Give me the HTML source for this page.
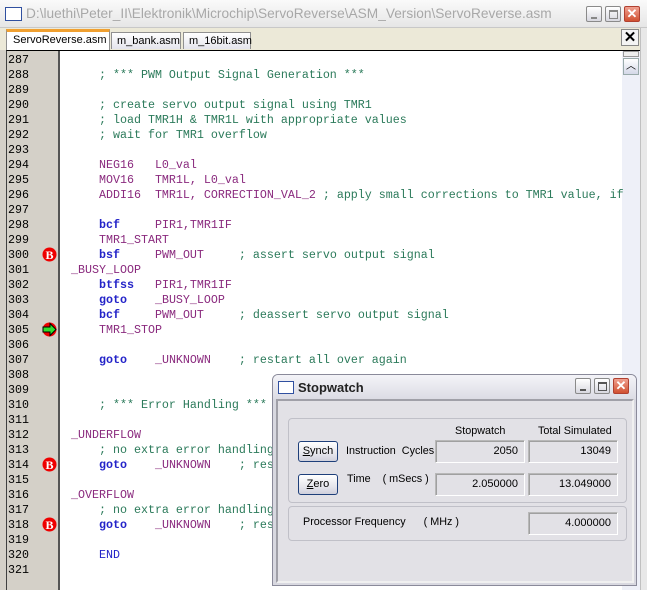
<!DOCTYPE html>
<html><head><meta charset="utf-8"><style>
*{margin:0;padding:0;box-sizing:border-box}
body{width:647px;height:590px;overflow:hidden;background:#d4d0c8;position:relative;font-family:"Liberation Sans",sans-serif}
.abs{position:absolute}
.code{font-family:"Liberation Mono",monospace;font-size:11.67px;line-height:15px;white-space:pre}
.ln{position:absolute;left:8px;color:#000}
.cl{position:absolute;left:71px}
.k{color:#2323c8;font-weight:bold}
.p{color:#8a2a7e}
.c{color:#2b7a5a}
.d{color:#2323c8}
.tb{position:absolute;width:16px;height:16px;border:1px solid #8a8a8a;background:linear-gradient(#fff,#d8d8e0);border-radius:2px}
.fld{position:absolute;border:1px solid #b8b8b8;border-right-color:#fff;border-bottom-color:#fff;box-shadow:inset 1px 1px 0 #a0a0a0;background:#e2e1e6;font-size:11px;text-align:right;padding:4px 6px 0 0;height:23px}
.lbl{position:absolute;font-size:10.8px;color:#000;white-space:nowrap}
.btn{position:absolute;width:40px;height:21px;border:1px solid #1e3f7a;border-radius:3px;background:linear-gradient(#fff,#e6e6ec 60%,#cfd0dc);font-size:11px;text-align:center;line-height:19px}
.tab{position:absolute;font-size:11px;white-space:nowrap}
</style></head><body>
<div class="abs" style="left:0;top:0;width:647px;height:28px;background:linear-gradient(#fafafa,#e6e6e6);border-bottom:1px solid #c8c8c8"></div>
<div class="abs" style="left:5px;top:7px;width:17px;height:14px;border:1px solid #3050a0;background:#fff"></div>
<div class="abs" style="left:26px;top:6px;font-size:13.7px;color:#a8a8a8;white-space:nowrap">D:\luethi\Peter_II\Elektronik\Microchip\ServoReverse\ASM_Version\ServoReverse.asm</div>
<div class="tb" style="left:586px;top:6px"><div class="abs" style="left:4px;top:10px;width:6px;height:2px;background:#888"></div></div>
<div class="tb" style="left:605px;top:6px"><div class="abs" style="left:3px;top:3px;width:9px;height:9px;border:1px solid #888;border-top-width:2px"></div></div>
<div class="tb" style="left:624px;top:6px;background:linear-gradient(#f0a090,#d05030);border-color:#b04030;color:#fff;font-size:13px;line-height:14px;text-align:center;font-weight:bold">✕</div>
<div class="abs" style="left:0;top:28px;width:647px;height:22px;background:#ece9d8"></div>
<div class="tab" style="left:6px;top:29px;width:104px;height:21px;background:#fff;border:1px solid #909090;border-top:3px solid #f0a030;border-bottom:none;padding:2px 0 0 6px">ServoReverse.asm</div>
<div class="tab" style="left:111px;top:32px;width:70px;height:17px;background:linear-gradient(#fff,#e4e4ec);border:1px solid #909090;border-bottom:none;padding:2px 0 0 5px">m_bank.asm</div>
<div class="tab" style="left:183px;top:32px;width:68px;height:17px;background:linear-gradient(#fff,#e4e4ec);border:1px solid #909090;border-bottom:none;padding:2px 0 0 5px">m_16bit.asm</div>
<div class="abs" style="left:621px;top:29px;width:18px;height:17px;border:1px solid #888;background:#f4f4f4;font-size:15px;font-weight:bold;text-align:center;line-height:15px">✕</div>
<div class="abs" style="left:6px;top:50px;width:634px;height:540px;background:#fff;border-top:1px solid #000;border-left:1px solid #404040"></div>
<div class="abs" style="left:7px;top:51px;width:53px;height:539px;background:#d4d0c8;border-right:2px solid #555"></div>
<div class="abs" style="left:622px;top:51px;width:18px;height:539px;background:#eef0f8"></div>
<div class="abs" style="left:623px;top:51px;width:16px;height:6px;border:1px solid #999;background:#eee"></div>
<div class="abs" style="left:623px;top:58px;width:16px;height:17px;border:1px solid #9aa;background:linear-gradient(#fff,#d4d8e8);font-size:10px;text-align:center;line-height:16px">︿</div>
<div class="abs" style="left:640px;top:28px;width:7px;height:562px;background:#e8e8e8;border-left:1px solid #c0c0c0"></div>

<div class="code">
<div class="ln" style="top:53px">287</div>
<div class="ln" style="top:68px">288</div><div class="cl c" style="top:68px">    ; *** PWM Output Signal Generation ***</div>
<div class="ln" style="top:83px">289</div>
<div class="ln" style="top:98px">290</div><div class="cl c" style="top:98px">    ; create servo output signal using TMR1</div>
<div class="ln" style="top:113px">291</div><div class="cl c" style="top:113px">    ; load TMR1H &amp; TMR1L with appropriate values</div>
<div class="ln" style="top:128px">292</div><div class="cl c" style="top:128px">    ; wait for TMR1 overflow</div>
<div class="ln" style="top:143px">293</div>
<div class="ln" style="top:158px">294</div><div class="cl p" style="top:158px">    NEG16   L0_val</div>
<div class="ln" style="top:173px">295</div><div class="cl p" style="top:173px">    MOV16   TMR1L, L0_val</div>
<div class="ln" style="top:188px">296</div><div class="cl" style="top:188px"><span class="p">    ADDI16  TMR1L, CORRECTION_VAL_2 </span><span class="c">; apply small corrections to TMR1 value, if</span></div>
<div class="ln" style="top:203px">297</div>
<div class="ln" style="top:218px">298</div><div class="cl" style="top:218px">    <span class="k">bcf</span><span class="p">     PIR1,TMR1IF</span></div>
<div class="ln" style="top:233px">299</div><div class="cl p" style="top:233px">    TMR1_START</div>
<div class="ln" style="top:248px">300</div><div class="cl" style="top:248px">    <span class="k">bsf</span><span class="p">     PWM_OUT</span>     <span class="c">; assert servo output signal</span></div>
<div class="ln" style="top:263px">301</div><div class="cl p" style="top:263px">_BUSY_LOOP</div>
<div class="ln" style="top:278px">302</div><div class="cl" style="top:278px">    <span class="k">btfss</span><span class="p">   PIR1,TMR1IF</span></div>
<div class="ln" style="top:293px">303</div><div class="cl" style="top:293px">    <span class="k">goto</span><span class="p">    _BUSY_LOOP</span></div>
<div class="ln" style="top:308px">304</div><div class="cl" style="top:308px">    <span class="k">bcf</span><span class="p">     PWM_OUT</span>     <span class="c">; deassert servo output signal</span></div>
<div class="ln" style="top:323px">305</div><div class="cl p" style="top:323px">    TMR1_STOP</div>
<div class="ln" style="top:338px">306</div>
<div class="ln" style="top:353px">307</div><div class="cl" style="top:353px">    <span class="k">goto</span><span class="p">    _UNKNOWN</span>    <span class="c">; restart all over again</span></div>
<div class="ln" style="top:368px">308</div>
<div class="ln" style="top:383px">309</div>
<div class="ln" style="top:398px">310</div><div class="cl c" style="top:398px">    ; *** Error Handling ***</div>
<div class="ln" style="top:413px">311</div>
<div class="ln" style="top:428px">312</div><div class="cl p" style="top:428px">_UNDERFLOW</div>
<div class="ln" style="top:443px">313</div><div class="cl c" style="top:443px">    ; no extra error handling</div>
<div class="ln" style="top:458px">314</div><div class="cl" style="top:458px">    <span class="k">goto</span><span class="p">    _UNKNOWN</span>    <span class="c">; res</span></div>
<div class="ln" style="top:473px">315</div>
<div class="ln" style="top:488px">316</div><div class="cl p" style="top:488px">_OVERFLOW</div>
<div class="ln" style="top:503px">317</div><div class="cl c" style="top:503px">    ; no extra error handling</div>
<div class="ln" style="top:518px">318</div><div class="cl" style="top:518px">    <span class="k">goto</span><span class="p">    _UNKNOWN</span>    <span class="c">; res</span></div>
<div class="ln" style="top:533px">319</div>
<div class="ln" style="top:548px">320</div><div class="cl d" style="top:548px">    END</div>
<div class="ln" style="top:563px">321</div>
</div>
<svg class="abs" style="left:42px;top:247px" width="15" height="15"><circle cx="7.5" cy="7.5" r="7" fill="#e00"/><text x="7.5" y="12" text-anchor="middle" font-family="Liberation Serif" font-weight="bold" font-size="12" fill="#fff">B</text></svg>
<svg class="abs" style="left:42px;top:457px" width="15" height="15"><circle cx="7.5" cy="7.5" r="7" fill="#e00"/><text x="7.5" y="12" text-anchor="middle" font-family="Liberation Serif" font-weight="bold" font-size="12" fill="#fff">B</text></svg>
<svg class="abs" style="left:42px;top:517px" width="15" height="15"><circle cx="7.5" cy="7.5" r="7" fill="#e00"/><text x="7.5" y="12" text-anchor="middle" font-family="Liberation Serif" font-weight="bold" font-size="12" fill="#fff">B</text></svg>
<svg class="abs" style="left:42px;top:322px" width="15" height="15"><circle cx="7.5" cy="7.5" r="7" fill="#e00"/><path d="M1 5H8V1.5L14 7.5L8 13.5V10H1Z" fill="#2ee02e" stroke="#000" stroke-width="1"/></svg>

<div class="abs" style="left:272px;top:374px;width:365px;height:212px;background:#d8d8e0;border:1px solid #8a8a9a;border-radius:6px 6px 0 0"></div>
<div class="abs" style="left:273px;top:375px;width:363px;height:24px;background:linear-gradient(#f4f4f8,#dcdce4);border-radius:5px 5px 0 0"></div>
<div class="abs" style="left:278px;top:381px;width:16px;height:13px;border:1px solid #3050a0;background:#fff"></div>
<div class="abs" style="left:298px;top:380px;font-size:13px;font-weight:bold;color:#222">Stopwatch</div>
<div class="tb" style="left:575px;top:378px"><div class="abs" style="left:4px;top:10px;width:6px;height:2px;background:#555"></div></div>
<div class="tb" style="left:594px;top:378px"><div class="abs" style="left:3px;top:3px;width:9px;height:9px;border:1px solid #555;border-top-width:2px"></div></div>
<div class="tb" style="left:613px;top:378px;background:linear-gradient(#f0a090,#d05030);border-color:#b04030;color:#fff;font-size:13px;line-height:14px;text-align:center;font-weight:bold">✕</div>
<div class="abs" style="left:276px;top:399px;width:358px;height:184px;background:#e2e1e6;border:2px solid #a0a0a8;border-right-color:#f0f0f0;border-bottom-color:#f0f0f0"></div>
<div class="abs" style="left:288px;top:418px;width:339px;height:85px;border:1px solid #c0c0c8;border-radius:4px"></div>
<div class="abs" style="left:288px;top:506px;width:339px;height:35px;border:1px solid #c0c0c8;border-radius:4px"></div>
<div class="lbl" style="left:455px;top:425px">Stopwatch</div>
<div class="lbl" style="left:538px;top:425px">Total Simulated</div>
<div class="btn" style="left:298px;top:441px"><u>S</u>ynch</div>
<div class="lbl" style="left:346px;top:445px">Instruction&nbsp; Cycles</div>
<div class="fld" style="left:435px;top:440px;width:90px">2050</div>
<div class="fld" style="left:528px;top:440px;width:90px">13049</div>
<div class="btn" style="left:298px;top:474px"><u>Z</u>ero</div>
<div class="lbl" style="left:347px;top:473px">Time &nbsp;&nbsp; ( mSecs )</div>
<div class="fld" style="left:435px;top:473px;width:90px">2.050000</div>
<div class="fld" style="left:528px;top:473px;width:90px">13.049000</div>
<div class="lbl" style="left:303px;top:516px">Processor Frequency &nbsp;&nbsp;&nbsp;&nbsp; ( MHz )</div>
<div class="fld" style="left:528px;top:512px;width:90px">4.000000</div>
</body></html>
